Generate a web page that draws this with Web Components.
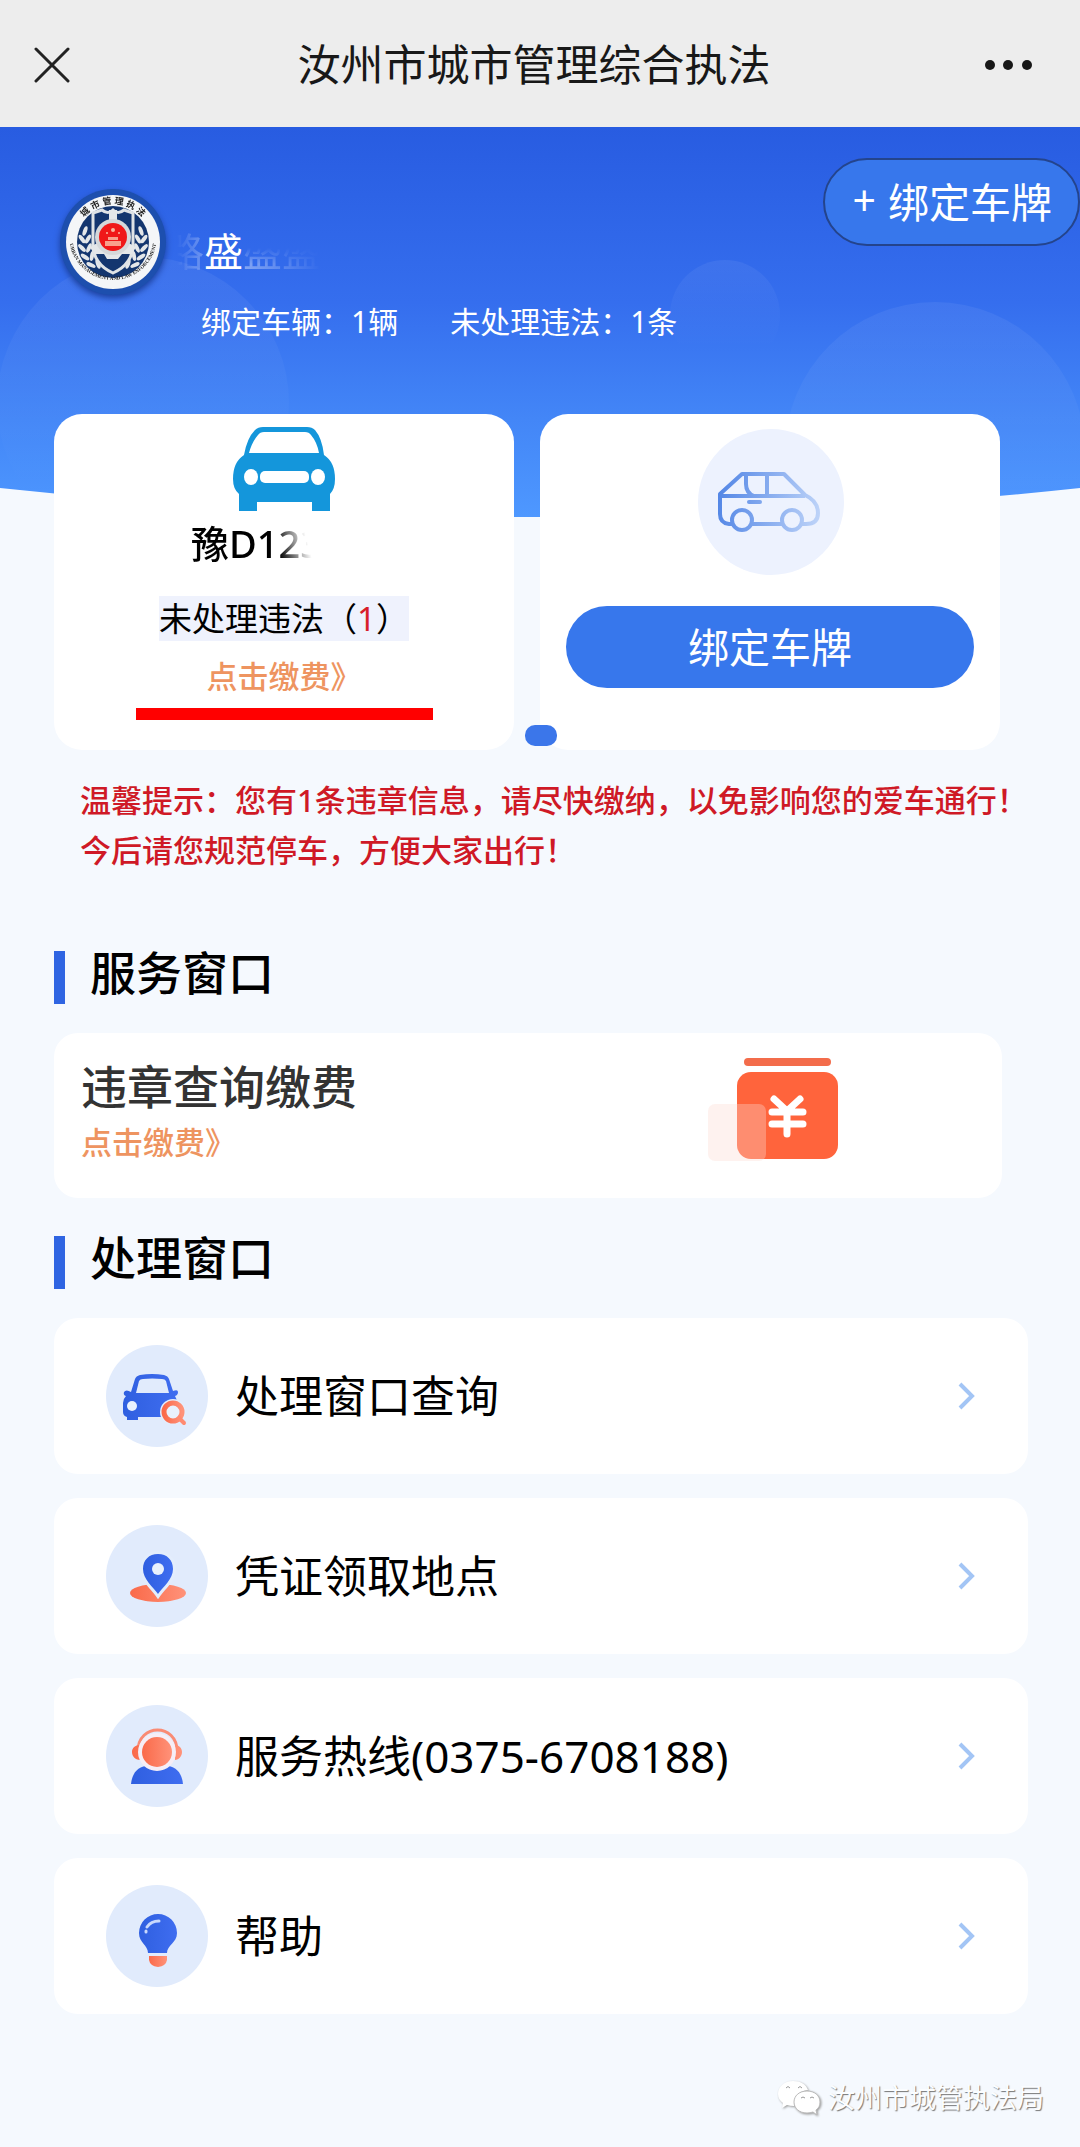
<!DOCTYPE html>
<html lang="zh-CN">
<head>
<meta charset="utf-8">
<meta name="viewport" content="width=device-width, initial-scale=1">
<title>汝州市城市管理综合执法</title>
<style>
body {
	margin: 0;
	background: #f5f9fe;
	color: #000;
	font-family: "Noto Sans", "Noto Sans CJK SC", sans-serif;
}
</style>
</head>
<body>
<city-app></city-app>

<script>
const BASE_STYLE = `
*, *::before, *::after { box-sizing: border-box; }
:host { display: block; }
svg { display: block; flex: none; }
h1, h2, p, ul { margin: 0; padding: 0; font-weight: inherit; }
button { margin: 0; padding: 0; border: 0; background: none; color: inherit; font: inherit; cursor: pointer; }
a { color: inherit; text-decoration: none; }
`;

const MENU_ICONS = {
	car: `
		<path fill="url(#blue)" fill-rule="evenodd" d="M25 47 29 34Q30 31 34 30Q46 28 58 30Q62 31 63 34L67 46Q72 44 72 47Q72 50 69 51Q71 54 71 58V72H32V75H21V72Q17 71 17 67V58Q17 54 20 51Q17 50 18 47Q20 44 25 47ZM33 36 30 48H63L60 36Q59 34 56 34Q46 33 37 34Q34 34 33 36Z"/>
		<circle cx="26" cy="61" r="5" fill="#e9f1fd"/>
		<circle cx="67" cy="67" r="13" fill="#e3edfc"/>
		<circle cx="67" cy="67" r="9" fill="#e9f1fd" stroke="url(#orange)" stroke-width="5"/>
		<path d="M73 73 78 78" stroke="#ff8a70" stroke-width="4" stroke-linecap="round"/>`,
	pin: `
		<ellipse cx="52" cy="68" rx="28" ry="9" fill="url(#orange)"/>
		<path d="M52 29C43 29 37 35 37 44C37 54 47 62 52 69C57 62 67 54 67 44C67 35 61 29 52 29Z" fill="url(#blue)" stroke="#e3edfc" stroke-width="6" paint-order="stroke"/>
		<circle cx="52" cy="44" r="6" fill="#e9f1fd"/>`,
	headset: `
		<path d="M32 46C32 18 71 18 71 46" fill="none" stroke="#fa8b74" stroke-width="3"/>
		<path d="M34 40V55C29 55 26 51 26 47S29 40 34 40ZM69 40V55C73 55 76 51 76 47S73 40 69 40Z" fill="url(#orange)"/>
		<path d="M25 79C26 69 31 62 40 61H62C71 62 76 69 77 79Z" fill="url(#blue)"/>
		<circle cx="51" cy="47" r="19" fill="#f6eef6"/>
		<circle cx="51" cy="47" r="15" fill="url(#orange)"/>`,
	bulb: `
		<path d="M42 68C42 60 33 58 33 48A19 19 0 0 1 71 48C71 58 61 60 61 68Z" fill="url(#blue)"/>
		<path d="M43 71H61V75Q60 81 52 82Q44 81 43 75Z" fill="url(#orange)"/>
		<path d="M41 42Q45 36 53 36M40 46V47" fill="none" stroke="#c8d8fc" stroke-width="3" stroke-linecap="round"/>`
};

class BaseElement extends HTMLElement {
	connectedCallback() {
		if (this.shadowRoot) {
			return;
		}
		this.attachShadow({mode: 'open'}).innerHTML = `<style>${BASE_STYLE}${this.css()}</style>${this.html()}`;
	}

	css() {
		return '';
	}

	html() {
		return '<slot></slot>';
	}
}

customElements.define('nav-header', class extends BaseElement {
	css() {
		return `
		:host { background: #ededed; color: #181818; }
		header { display: flex; align-items: center; justify-content: space-between; padding: 35px 34px 32px; }
		button { display: flex; align-items: center; width: 50px; height: 60px; }
		button.more { justify-content: flex-end; width: 62px; }
		h1 { font-size: 43px; line-height: 60px; }`;
	}

	html() {
		return `
		<header>
			<button aria-label="关闭">
				<svg width="36" height="36" viewBox="0 0 36 36"><path d="M2 2 34 34M34 2 2 34" stroke="#222" stroke-width="3" stroke-linecap="round"/></svg>
			</button>
			<h1><slot></slot></h1>
			<button class="more" aria-label="更多">
				<svg width="62" height="12" viewBox="0 0 62 12" fill="#181818"><circle cx="6" cy="6" r="5"/><circle cx="24" cy="6" r="5"/><circle cx="43" cy="6" r="5"/></svg>
			</button>
		</header>`;
	}
});

customElements.define('city-emblem', class extends BaseElement {
	css() {
		return ':host { flex: none; } svg { overflow: visible; filter: drop-shadow(0 3px 3px #1b3f9c); }';
	}

	html() {
		const leaf = (x, y, r) => `<ellipse cx="${x}" cy="${y}" rx="2" ry="5" transform="rotate(${r} ${x} ${y})"/>`;
		const leaves = [[25, 42, 20], [22, 50, -35], [28, 50, 30], [22, 59, -45], [29, 59, 25], [25, 68, -55], [32, 67, 10], [31, 76, -65], [38, 75, -20]];
		return `
		<svg width="106" height="106" viewBox="0 0 106 106" role="img" aria-label="城市管理执法">
			<defs>
				<path id="top" d="M15 53A38 38 0 0 1 91 53"/>
				<path id="bottom" d="M9 47A44 44 0 1 0 97 47"/>
			</defs>
			<circle cx="53" cy="53" r="53" fill="#1d4fae"/>
			<circle cx="53" cy="53" r="47" fill="#f4f6f8"/>
			<circle cx="53" cy="53" r="36" fill="#14366f"/>
			<g fill="#e4e7e9">${leaves.map(([x, y, r]) => leaf(x, y, r) + leaf(106 - x, y, -r)).join('')}</g>
			<path d="M33 24 42 21Q48 26 53 21Q58 26 64 21L73 24V55Q73 75 53 84Q33 75 33 55Z" fill="#14366f" stroke="#dfe3e6" stroke-width="3"/>
			<path d="M49 21H57V36H49Z" fill="#e4e7e9"/>
			<path d="M30 58 41 52H65L76 58 72 65H62L58 70H47L44 65H34Z" fill="#e4e7e9"/>
			<circle cx="53" cy="48" r="18" fill="#d5d8da"/>
			<circle cx="53" cy="48" r="14" fill="#f01818"/>
			<path d="M45 52H61V57H45ZM48 48H58V51H48Z" fill="#f8a08c"/>
			<g fill="#f8b8a0"><circle cx="53" cy="41" r="2"/><circle cx="47" cy="44" r="1"/><circle cx="59" cy="44" r="1"/></g>
			<text font-weight="700" fill="#222" text-anchor="middle">
				<textPath href="#top" startOffset="50%" font-size="9">城 市 管 理 执 法</textPath>
				<textPath href="#bottom" startOffset="50%" font-family="Liberation Serif, serif" font-size="5">URBAN MANAGEMENT AND LAW ENFORCEMENT</textPath>
			</text>
		</svg>`;
	}
});

customElements.define('user-profile', class extends BaseElement {
	css() {
		return `
		:host { color: #fff; }
		.row { display: flex; align-items: flex-start; justify-content: space-between; padding: 31px 0 0 60px; }
		.user { display: flex; gap: 35px; padding-top: 31px; }
		.info { display: grid; gap: 27px; padding-top: 38px; }
		.name { padding-left: 3px; font-size: 39px; line-height: 48px; }
		.ghost { opacity: 0.4; mask-image: linear-gradient(to right, #000, transparent), linear-gradient(transparent 45%, #000 75%); mask-composite: intersect; }
		.ghost.before { margin-left: -1em; opacity: 0.3; mask-image: linear-gradient(to right, transparent 30%, #000); }
		.stats { display: flex; gap: 52px; font-size: 30px; line-height: 40px; }
		.bind { display: flex; align-items: center; gap: 12px; height: 88px; padding: 0 26px 4px 28px; border: 2px solid #24448c; border-radius: 44px; background: #3777ec; font-size: 41px; white-space: nowrap; }`;
	}

	html() {
		return `
		<div class="row">
			<div class="user">
				<city-emblem></city-emblem>
				<div class="info">
					<p class="name"><span class="ghost before" aria-hidden="true">路</span><slot></slot><span class="ghost" aria-hidden="true">盛盛</span></p>
					<p class="stats"><span>绑定车辆：${this.getAttribute('vehicles')}辆</span><span>未处理违法：${this.getAttribute('violations')}条</span></p>
				</div>
			</div>
			<button class="bind"><span>+</span><span>绑定车牌</span></button>
		</div>`;
	}
});

customElements.define('vehicle-card', class extends BaseElement {
	css() {
		return `
		:host { display: flex; flex-direction: column; align-items: center; padding: 13px 20px 30px; border-radius: 28px; background: #fff; }
		.plate { width: 186px; margin-top: 8px; font-size: 38px; font-weight: 500; line-height: 48px; mask-image: linear-gradient(75deg, #000 46%, transparent 62%); }
		.violations { margin-top: 29px; background: #eff2fd; font-size: 33px; line-height: 45px; white-space: nowrap; }
		.violations b { color: #d81e2a; font-weight: inherit; }
		a { margin-top: 15px; color: #ee9460; font-size: 31px; font-weight: 500; line-height: 40px; }
		.underline { width: 297px; max-width: 100%; height: 12px; margin-top: 12px; background: #f00; }`;
	}

	html() {
		return `
		<svg width="102" height="84" viewBox="0 0 102 84">
			<path fill="#1496db" fill-rule="evenodd" d="M11 28Q14 11 22 3Q25 0 30 0H74Q79 0 82 3Q89 11 91 28Q102 35 102 52Q102 62 97 67V84H79V75H24V84H6V67Q0 62 0 52Q0 35 11 28ZM16 26H86Q84 15 78 8Q76 5 72 5H31Q27 5 25 8Q19 15 16 26Z"/>
			<ellipse cx="18" cy="50" rx="7" ry="8" fill="#fff"/><ellipse cx="85" cy="50" rx="7" ry="8" fill="#fff"/>
			<rect x="27" y="44" width="49" height="12" rx="5" fill="#fff"/>
		</svg>
		<p class="plate"><slot></slot></p>
		<p class="violations">未处理违法（<b>${this.getAttribute('violations')}</b>）</p>
		<a href="#pay">点击缴费》</a>
		<div class="underline"></div>`;
	}
});

customElements.define('bind-card', class extends BaseElement {
	css() {
		return `
		:host { display: flex; flex-direction: column; align-items: center; padding: 14px 26px 28px; border-radius: 28px; background: #fff; }
		button { width: 100%; height: 82px; margin-top: 31px; padding-bottom: 4px; border-radius: 41px; background: #3777ec; color: #fff; font-size: 41px; }`;
	}

	html() {
		return `
		<svg width="147" height="147" viewBox="0 0 147 147">
			<defs><linearGradient id="fade" gradientUnits="userSpaceOnUse" x1="22" y1="70" x2="122" y2="80"><stop stop-color="#5487e6"/><stop offset="1" stop-color="#bcd2f8"/></linearGradient></defs>
			<circle cx="74" cy="74" r="73" fill="#edf2fe"/>
			<g fill="none" stroke="url(#fade)" stroke-width="4" stroke-linejoin="round">
				<path d="M35 96H32Q23 95 23 86V66L45 46H87L108 67Q121 73 121 85Q121 96 109 96H105M55 96H85M23 68H108M49 46V56Q49 65 57 68M70 46V67"/>
				<path d="M52 74H63" stroke-linecap="round"/>
				<circle cx="45" cy="92" r="10"/><circle cx="95" cy="92" r="10"/>
			</g>
		</svg>
		<button><slot></slot></button>`;
	}
});

customElements.define('section-title', class extends BaseElement {
	css() {
		return `
		:host { display: flex; gap: 25px; height: 56px; }
		.bar { align-self: flex-end; width: 11px; height: 53px; background: #2f65e2; }
		h2 { font-size: 46px; font-weight: 500; line-height: 48px; }`;
	}

	html() {
		return '<span class="bar"></span><h2><slot></slot></h2>';
	}
});

customElements.define('service-card', class extends BaseElement {
	css() {
		return `
		a { display: grid; grid-template-columns: 644fr 304fr; align-items: center; min-height: 165px; padding: 16px 0 28px 27px; border-radius: 24px; background: #fff; }
		.title { color: #333; font-size: 46px; font-weight: 500; line-height: 64px; }
		.action { color: #ee9460; font-size: 31px; font-weight: 500; line-height: 48px; }`;
	}

	html() {
		return `
		<a href="#pay">
			<div>
				<p class="title"><slot></slot></p>
				<p class="action">点击缴费》</p>
			</div>
			<svg width="132" height="106" viewBox="0 0 132 106">
				<rect x="37" y="1" width="87" height="8" rx="4" fill="#f36c4b"/>
				<rect x="30" y="15" width="101" height="87" rx="14" fill="#ff643c"/>
				<rect x="1" y="47" width="58" height="57" rx="7" fill="#fdd9d2" fill-opacity="0.35"/>
				<path d="M67 42 80 54 93 42M80 54V77M65 55H96M65 67H96" fill="none" stroke="#fff" stroke-width="7" stroke-linecap="round" stroke-linejoin="round"/>
			</svg>
		</a>`;
	}
});

customElements.define('menu-item', class extends BaseElement {
	css() {
		return `
		a { display: flex; align-items: center; gap: 26px; min-height: 156px; padding: 0 53px 0 52px; border-radius: 24px; background: #fff; }
		.label { flex: 1; font-size: 44px; line-height: 60px; }`;
	}

	html() {
		return `
		<a href="#${this.getAttribute('icon')}">
			<svg width="103" height="103" viewBox="0 0 103 103">
				<defs>
					<linearGradient id="blue"><stop stop-color="#2f5fe0"/><stop offset="1" stop-color="#3f6df0"/></linearGradient>
					<linearGradient id="orange"><stop stop-color="#fa6a4a"/><stop offset="1" stop-color="#ff9279"/></linearGradient>
				</defs>
				<circle cx="51" cy="51" r="51" fill="#e1ebfc"/>
				${MENU_ICONS[this.getAttribute('icon')]}
			</svg>
			<span class="label"><slot></slot></span>
			<svg width="18" height="28" viewBox="0 0 18 28"><path d="M3 2 15 14 3 26" fill="none" stroke="#a3c5f5" stroke-width="4"/></svg>
		</a>`;
	}
});

customElements.define('account-footer', class extends BaseElement {
	css() {
		return `
		footer { display: flex; align-items: center; justify-content: flex-end; gap: 7px; padding: 0 36px 29px; color: #fbfdff; font-size: 27px; line-height: 40px; text-shadow: 1px 1px 1px #777; }
		svg { filter: drop-shadow(1px 1px 1px #999); }`;
	}

	html() {
		return `
		<footer>
			<svg width="44" height="36" viewBox="0 0 44 36">
				<path d="M16 1C7 1 1 7 1 14C1 18 3 21 6 23L5 28L10 25Q13 26 17 26Q16 12 31 10C29 4 23 1 16 1Z" fill="#fff"/>
				<path d="M30 11C22 11 17 16 17 22S22 33 30 33Q33 33 36 32L40 35L39 30C42 28 43 25 43 22C43 16 38 11 30 11Z" fill="#fff" stroke="#bbb" stroke-width="1"/>
				<path d="M9 8Q11 5 13 8M21 8Q23 5 25 8M24 18Q26 16 28 18M33 18Q35 16 37 18" fill="none" stroke="#999" stroke-width="1"/>
			</svg>
			<slot></slot>
		</footer>`;
	}
});

customElements.define('city-app', class extends BaseElement {
	css() {
		return `
		.hero { position: relative; isolation: isolate; }
		.backdrop { position: absolute; z-index: -1; top: 0; left: 0; width: 100%; height: 390px; }
		.vehicles { display: grid; grid-template-columns: 1fr 1fr; gap: 26px; margin-top: 72px; padding: 0 80px 0 54px; }
		/* carousel page marker, over the lower edge of both cards */
		.pager { position: absolute; bottom: 4px; left: 50%; width: 32px; height: 21px; margin-left: -15px; border-radius: 10px; background: #3b76ea; }
		.notice { padding: 25px 40px 0 80px; color: #cf1926; font-size: 31px; font-weight: 500; line-height: 50px; }
		main { padding: 73px 52px 64px 54px; }
		service-card { margin: 29px 26px 35px 0; }
		.menu { display: grid; gap: 24px; margin-top: 29px; }`;
	}

	html() {
		return `
		<nav-header>汝州市城市管理综合执法</nav-header>
		<section class="hero">
			<svg class="backdrop" viewBox="0 0 1080 390" preserveAspectRatio="none">
				<defs>
					<linearGradient id="sky" x2="0" y2="1"><stop stop-color="#285ce1"/><stop offset="0.45" stop-color="#356eee"/><stop offset="0.75" stop-color="#4386f7"/><stop offset="1" stop-color="#4e98ff"/></linearGradient>
					<linearGradient id="bubble" x2="0" y2="1"><stop stop-color="#fff" stop-opacity="0.06"/><stop offset="0.8" stop-color="#fff" stop-opacity="0"/></linearGradient>
					<clipPath id="wave"><path d="M0 0H1080V361Q540 419 0 361Z"/></clipPath>
				</defs>
				<g clip-path="url(#wave)">
					<path d="M0 0H1080V390H0Z" fill="url(#sky)"/>
					<circle cx="143" cy="276" r="146" fill="url(#bubble)"/>
					<circle cx="725" cy="188" r="55" fill="url(#bubble)"/>
					<circle cx="935" cy="325" r="150" fill="url(#bubble)"/>
				</g>
			</svg>
			<user-profile vehicles="1" violations="1">盛</user-profile>
			<div class="vehicles">
				<vehicle-card violations="1">豫D123</vehicle-card>
				<bind-card>绑定车牌</bind-card>
			</div>
			<span class="pager"></span>
		</section>
		<p class="notice">温馨提示：您有1条违章信息，请尽快缴纳，以免影响您的爱车通行！<br>今后请您规范停车，方便大家出行！</p>
		<main>
			<section-title>服务窗口</section-title>
			<service-card>违章查询缴费</service-card>
			<section-title>处理窗口</section-title>
			<nav class="menu">
				<menu-item icon="car">处理窗口查询</menu-item>
				<menu-item icon="pin">凭证领取地点</menu-item>
				<menu-item icon="headset">服务热线(0375-6708188)</menu-item>
				<menu-item icon="bulb">帮助</menu-item>
			</nav>
		</main>
		<account-footer>汝州市城管执法局</account-footer>`;
	}
});
</script>
</body>
</html>
